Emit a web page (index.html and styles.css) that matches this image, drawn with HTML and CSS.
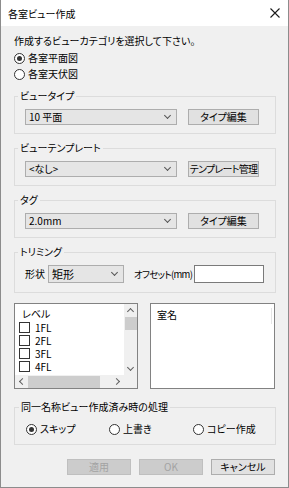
FILE: index.html
```html
<!DOCTYPE html>
<html lang="ja">
<head>
    <meta charset="UTF-8">
    <title>各室ビュー作成</title>
    <link rel="stylesheet" href="styles.css">
</head>
<body>
    <div class="dialog">
        <div class="titlebar">
            <span class="title">各室ビュー作成</span>
            <svg class="close" viewBox="0 0 10 10" width="10" height="10">
                <path d="M0.5 0.5L9.5 9.5M9.5 0.5L0.5 9.5" stroke="#1a1a1a" stroke-width="1.1" fill="none"/>
            </svg>
        </div>

        <div class="dialog-body">
            <p class="prompt">作成するビューカテゴリを選択して下さい。</p>
            <div class="radio"><span class="radio-mark checked"></span>各室平面図</div>
            <div class="radio"><span class="radio-mark"></span>各室天伏図</div>

            <!-- ビュータイプ -->
            <fieldset class="group">
                <legend>ビュータイプ</legend>
                <div class="row">
                    <div class="combo wide"><span>10 平面</span><i class="chev"></i></div>
                    <div class="btn">タイプ編集</div>
                </div>
            </fieldset>

            <!-- ビューテンプレート -->
            <fieldset class="group">
                <legend>ビューテンプレート</legend>
                <div class="row">
                    <div class="combo wide"><span>&lt;なし&gt;</span><i class="chev"></i></div>
                    <div class="btn tight">テンプレート管理</div>
                </div>
            </fieldset>

            <!-- タグ -->
            <fieldset class="group">
                <legend>タグ</legend>
                <div class="row">
                    <div class="combo wide"><span>2.0mm</span><i class="chev"></i></div>
                    <div class="btn">タイプ編集</div>
                </div>
            </fieldset>

            <!-- トリミング -->
            <fieldset class="group trim">
                <legend>トリミング</legend>
                <div class="row">
                    <span class="field-label">形状</span>
                    <div class="combo shape"><span>矩形</span><i class="chev"></i></div>
                    <span class="field-label offset">オフセット(mm)</span>
                    <div class="textbox"></div>
                </div>
            </fieldset>

            <!-- リスト -->
            <div class="lists">
                <div class="listbox level-list">
                    <div class="list-main">
                        <div class="list-items">
                            <div class="list-head">レベル</div>
                            <div class="check-row"><span class="checkbox"></span>1FL</div>
                            <div class="check-row"><span class="checkbox"></span>2FL</div>
                            <div class="check-row"><span class="checkbox"></span>3FL</div>
                            <div class="check-row"><span class="checkbox"></span>4FL</div>
                        </div>
                        <div class="vscroll">
                            <span class="arrow up"></span>
                            <span class="vthumb"></span>
                            <span class="vtrack"></span>
                            <span class="arrow down"></span>
                        </div>
                    </div>
                    <div class="hscroll">
                        <span class="arrow left"></span>
                        <span class="hthumb"></span>
                        <span class="htrack"></span>
                        <span class="arrow right"></span>
                        <span class="corner"></span>
                    </div>
                </div>
                <div class="listbox room-list">
                    <div class="room-head">
                        <span>室名</span>
                        <span class="col-line"></span>
                    </div>
                </div>
            </div>

            <!-- 同一名称 -->
            <fieldset class="group dup">
                <legend>同一名称ビュー作成済み時の処理</legend>
                <div class="radio-row">
                    <div class="radio"><span class="radio-mark checked"></span>スキップ</div>
                    <div class="radio"><span class="radio-mark"></span>上書き</div>
                    <div class="radio"><span class="radio-mark"></span>コピー作成</div>
                </div>
            </fieldset>

            <div class="actions">
                <div class="btn action disabled">適用</div>
                <div class="btn action disabled">OK</div>
                <div class="btn action">キャンセル</div>
            </div>
        </div>
    </div>
</body>
</html>
```

FILE: styles.css
```css
* {
    margin: 0;
    padding: 0;
    box-sizing: border-box;
}

body {
    width: 289px;
    height: 488px;
    background: #f0f0f0;
    font-family: "Noto Sans CJK JP", "Noto Sans", sans-serif;
    font-size: 10px;
    font-feature-settings: "palt";
    color: #000;
}

.dialog {
    width: 289px;
    height: 488px;
    border: 1px solid #8c8c8c;
    border-top: none;
    background: #f0f0f0;
    display: flex;
    flex-direction: column;
}

.titlebar {
    height: 26px;
    background: #fff;
    display: flex;
    align-items: center;
    justify-content: space-between;
    padding: 0 8px 0 7px;
}

.title {
    font-size: 10px;
    color: #000;
}

.dialog-body {
    padding: 8px 12px 0 13px;
    display: flex;
    flex-direction: column;
}

.prompt {
    line-height: 14px;
    margin-bottom: 2px;
}

.radio {
    display: flex;
    align-items: center;
    height: 16px;
    line-height: 16px;
    white-space: nowrap;
}

.radio-mark {
    width: 11px;
    height: 11px;
    border: 1px solid #333;
    border-radius: 50%;
    background: #fff;
    margin-right: 3px;
    display: flex;
    align-items: center;
    justify-content: center;
}

.radio-mark.checked::after {
    content: "";
    width: 5px;
    height: 5px;
    border-radius: 50%;
    background: #333;
}

.group {
    border: 1px solid #dcdcdc;
    border-radius: 0;
    padding: 6px 16px 8px 10px;
    margin-top: 7px;
    min-width: 0;
}

.group legend {
    padding: 0 2px;
    margin-left: -7px;
    line-height: 14px;
    height: 14px;
}

.row {
    display: flex;
    align-items: center;
    white-space: nowrap;
}

.combo {
    height: 16px;
    background: #e5e5e5;
    border: 1px solid #adadad;
    display: flex;
    align-items: center;
    justify-content: space-between;
    padding: 0 6px 0 3px;
    line-height: 14px;
    flex-shrink: 0;
}

.combo.wide {
    width: 152px;
    margin-right: 11px;
}

.chev {
    width: 5px;
    height: 5px;
    border-right: 1px solid #555;
    border-bottom: 1px solid #555;
    transform: rotate(45deg);
    margin-top: -3px;
}

.btn {
    height: 16px;
    width: 71px;
    background: #e1e1e1;
    border: 1px solid #adadad;
    display: flex;
    align-items: center;
    justify-content: center;
    line-height: 14px;
    white-space: nowrap;
    flex-shrink: 0;
}

.btn.tight {
    letter-spacing: -0.7px;
}

.trim {
    padding-top: 6px;
    padding-bottom: 9px;
}

.field-label {
    line-height: 18px;
    flex-shrink: 0;
}

.field-label.offset {
    font-size: 9.5px;
    letter-spacing: -0.7px;
}

.combo.shape {
    width: 76px;
    height: 18px;
    margin-left: 3px;
    margin-right: 10px;
    font-size: 11px;
}

.textbox {
    width: 70px;
    height: 18px;
    background: #fff;
    border: 1px solid #7a7a7a;
    margin-left: 2px;
    flex-shrink: 0;
}

.lists {
    display: grid;
    grid-template-columns: 124px 125px;
    column-gap: 12px;
    margin-top: 10px;
    height: 86px;
}

.listbox {
    border: 1px solid #828282;
    background: #fff;
}

.level-list {
    display: flex;
    flex-direction: column;
}

.list-main {
    flex: 1;
    display: flex;
    min-height: 0;
}

.list-items {
    flex: 1;
    padding: 3px 0 0 4px;
    overflow: hidden;
}

.list-head {
    line-height: 14px;
    padding-left: 3px;
}

.check-row {
    display: flex;
    align-items: center;
    height: 13px;
    line-height: 12px;
}

.checkbox {
    width: 11px;
    height: 11px;
    border: 1px solid #333;
    background: #fff;
    margin-right: 5px;
}

.vscroll {
    width: 13px;
    background: #f0f0f0;
    display: flex;
    flex-direction: column;
    align-items: center;
}

.vthumb {
    width: 12px;
    height: 13px;
    background: #cdcdcd;
}

.vtrack {
    flex: 1;
}

.hscroll {
    height: 13px;
    background: #f0f0f0;
    display: flex;
    align-items: center;
}

.hthumb {
    width: 72px;
    height: 12px;
    background: #cdcdcd;
}

.htrack {
    flex: 1;
}

.corner {
    width: 13px;
    height: 13px;
    background: #f0f0f0;
}

.arrow {
    width: 13px;
    height: 13px;
    display: flex;
    align-items: center;
    justify-content: center;
}

.arrow::before {
    content: "";
    width: 4px;
    height: 4px;
    border-left: 1px solid #606060;
    border-top: 1px solid #606060;
}

.arrow.up::before {
    transform: translateY(1px) rotate(45deg);
}

.arrow.down::before {
    transform: translateY(-1px) rotate(225deg);
}

.arrow.left::before {
    transform: translateX(1px) rotate(-45deg);
}

.arrow.right::before {
    transform: translateX(-1px) rotate(135deg);
}

.room-head {
    display: flex;
    justify-content: space-between;
    padding: 4px 2px 0 6px;
    line-height: 14px;
}

.col-line {
    width: 1px;
    height: 16px;
    background: #e5e5e5;
}

.dup {
    margin-top: 11px;
    padding: 7px 10px 7px 11px;
}

.radio-row {
    display: grid;
    grid-template-columns: 83px 84px auto;
}

.actions {
    display: flex;
    justify-content: flex-end;
    gap: 8px;
    margin-top: 14px;
    padding-right: 1px;
}

.btn.action {
    width: 64px;
}

.btn.disabled {
    background: #cccccc;
    border-color: #bfbfbf;
    color: #a3a3a3;
}
```
